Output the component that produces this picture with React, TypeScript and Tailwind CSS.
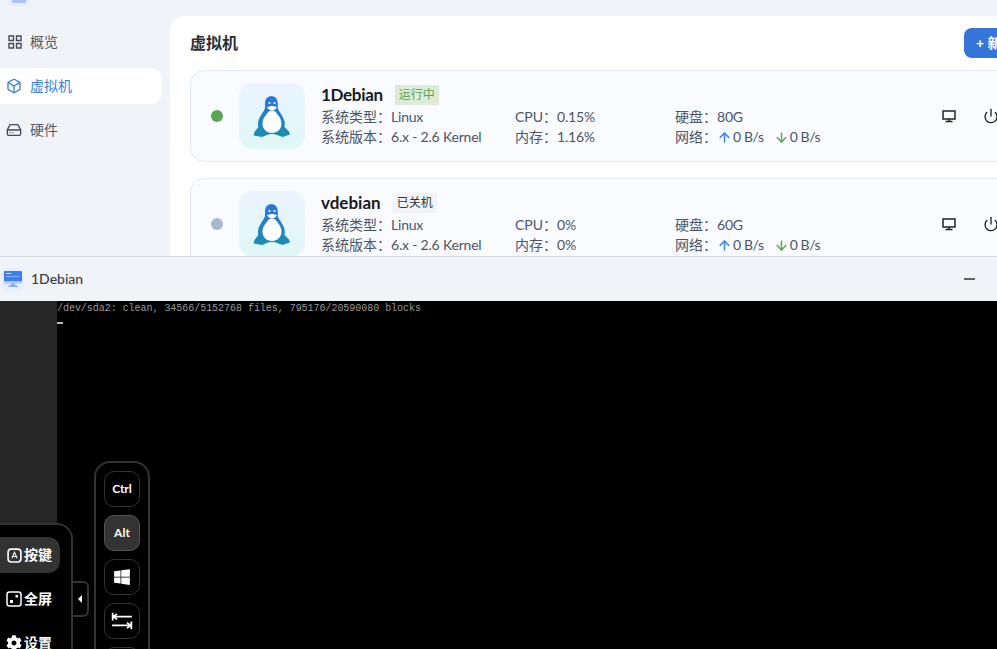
import React from 'react';
import { HardDrive, Box, Power, ArrowUp, ArrowDown } from 'lucide-react';
import { FaWindows, FaCog } from 'react-icons/fa';

const FONT = "font-['Lato','Noto_Sans_CJK_SC',sans-serif]";

function Tux({ id }: { id: string }) {
  return (
    <svg viewBox="0 0 66 66" className="w-[66px] h-[66px]">
      <defs>
        <linearGradient id={id} x1="0" y1="0" x2="0" y2="1">
          <stop offset="0" stopColor="#2a74df" />
          <stop offset="1" stopColor="#1a8fb0" />
        </linearGradient>
      </defs>
      <path
        fill={`url(#${id})`}
        d="M33 13c-4.500 0-7 3-7 7.500 0 3 .3 4.500-1 7-2.500 4-6 8.500-6 13.500 0 1 .1 2 .3 3L15.500 49l-1 3.500 8.500 1.500 5-2c1.500-.7 3-1 5-1s3.500.3 5 1l5.500 2 7.500-2.500-1-3-4.500-4.500c.2-1 .3-2 .3-3 0-5-3.500-9.500-6-13.500-1.300-2.500-1-4-1-7 0-4.500-2.500-7.500-7-7.500z"
      />
      <path
        fill="#fff"
        d="M33 27.500c-1.500 0-3 .7-4 1.900-2.700 3.100-5.500 6.600-5.500 11.100 0 5.500 4 9.500 9.500 9.500s9.500-4 9.500-9.500c0-4.500-2.800-8-5.500-11.100-1-1.200-2.500-1.900-4-1.900z"
      />
      <path fill="#fff" d="M28 24.500c1.500 2 3.300 3 5 3s3.500-1 5-3c-1.500-1-3.300-1.500-5-1.500s-3.500.5-5 1.500z" />
      <circle cx="30.500" cy="20" r="1.100" fill="#fff" />
      <circle cx="35.500" cy="20" r="1.100" fill="#fff" />
    </svg>
  );
}

function MonitorIcon() {
  return (
    <svg viewBox="0 0 14 14" className="w-[14px] h-[14px] ml-[7px] shrink-0 text-[#222]">
      <path d="M1 2h12v8H1z" fill="none" stroke="currentColor" strokeWidth="1.500" />
      <path d="M3.500 12.500h7M7 10v2.500" fill="none" stroke="currentColor" strokeWidth="1.500" />
    </svg>
  );
}

function GridIcon() {
  return (
    <svg viewBox="0 0 14 14" className="w-[14px] h-[14px] ml-px shrink-0 text-[#444a55]">
      <path d="M1 1h4.500v4.500H1zM8.500 1H13v4.500H8.500zM1 8.500h4.500V13H1zM8.500 8.500H13V13H8.500z" fill="none" stroke="currentColor" strokeWidth="1.400" />
    </svg>
  );
}

interface VmRow {
  name: string;
  on: boolean;
  cpu: string;
  mem: string;
  disk: string;
}

function VmCard({ vm }: { vm: VmRow }) {
  return (
    <div className="h-[92px] shrink-0 rounded-[14px] border border-[#e2e8f0] bg-[#fafbfe] flex items-center pl-[20px]">
      <div className={`w-3 h-3 rounded-full ${vm.on ? 'bg-[#5ba653]' : 'bg-[#a9b8cc]'}`} />
      <div className="ml-[16px] w-[66px] h-[66px] rounded-[14px] bg-gradient-to-b from-[#ebf4ff] to-[#dff7f6]">
        <Tux id={`tux-${vm.name}`} />
      </div>
      <div className="ml-[16px] w-[194px] text-sm leading-5 text-[#4a5568]">
        <div className="flex items-center h-5 mb-[2px]">
          <span className={`text-[17px] font-bold text-[#17191d] ${vm.on ? 'tracking-[-0.3px]' : ''}`}>{vm.name}</span>
          {vm.on ? (
            <span className="ml-[12px] px-[4px] h-5 text-[12px] leading-5 bg-[#dcecd9] text-[#5ba653]">运行中</span>
          ) : (
            <span className="ml-[12px] px-[4px] h-5 text-[12px] leading-5 bg-[#f1f3f7] text-[#333]">已关机</span>
          )}
        </div>
        <div>系统类型：<span className="tracking-[-0.2px]">Linux</span></div>
        <div>系统版本：<span className="tracking-[-0.2px]">6.x - 2.6 Kernel</span></div>
      </div>
      <div className="w-[160px] pt-[22px] text-sm leading-5 text-[#4a5568]">
        <div>CPU：<span className="tracking-[-0.2px]">{vm.cpu}</span></div>
        <div>内存：<span className="tracking-[-0.2px]">{vm.mem}</span></div>
      </div>
      <div className="w-[260px] pt-[22px] text-sm leading-5 text-[#4a5568]">
        <div>硬盘：<span className="tracking-[-0.2px]">{vm.disk}</span></div>
        <div className="flex items-center">
          <span>网络：</span>
          <ArrowUp className="w-[15px] h-[15px] text-[#3b82f6] shrink-0" strokeWidth={2.4} />
          <span className="ml-px mr-[10px] tracking-[-0.4px]">0 B/s</span>
          <ArrowDown className="w-[15px] h-[15px] text-[#5ba653] shrink-0" strokeWidth={2.4} />
          <span className="ml-px tracking-[-0.4px]">0 B/s</span>
        </div>
      </div>
      <MonitorIcon />
      <Power className="w-4 h-4 text-[#222] ml-[27px] shrink-0" strokeWidth={2} />
    </div>
  );
}

function NavItem({ icon, label, active }: { icon: React.ReactNode; label: string; active?: boolean }) {
  return (
    <div
      className={`h-9 flex items-center gap-[8px] pl-[6px] rounded-r-xl text-sm ${
        active ? 'bg-white text-[#3b7de0]' : 'text-[#555b66]'
      }`}
    >
      <span className="w-4 flex justify-center">{icon}</span>
      {label}
    </div>
  );
}

function KeyBtn({ children, active }: { children: React.ReactNode; active?: boolean }) {
  return (
    <div
      className={`w-9 h-9 shrink-0 rounded-[10px] border flex items-center justify-center text-white text-[12px] font-bold ${
        active ? 'bg-[#333] border-[#555]' : 'bg-black border-[#333]'
      }`}
    >
      {children}
    </div>
  );
}

export default function App() {
  return (
    <div className={`w-[997px] h-[649px] overflow-hidden flex flex-col ${FONT}`}>
      {/* manager page behind the console window */}
      <div className="h-[256px] shrink-0 flex w-[1180px] bg-[#f0f3f8] overflow-hidden">
        <aside className="w-[170px] shrink-0">
          <div className="ml-[7px] w-[23px] h-[6px] rounded-b-md bg-[#e6edfb] flex justify-center">
            <div className="w-[14px] h-[3px] bg-[#a9c4f5]" />
          </div>
          <div className="mt-[18px] w-[162px] flex flex-col gap-2">
            <NavItem icon={<GridIcon />} label="概览" />
            <NavItem active icon={<Box className="w-4 h-4" />} label="虚拟机" />
            <NavItem icon={<HardDrive className="w-4 h-4 text-[#444a55]" />} label="硬件" />
          </div>
        </aside>
        <main className="mt-4 flex-1 bg-white rounded-tl-2xl pl-[20px] pr-[20px] flex flex-col">
          <div className="h-[54px] shrink-0 flex items-start pt-[12px] w-[870px] justify-between">
            <h1 className="text-base font-bold text-[#2b2f36] leading-[30px]">虚拟机</h1>
            <button className="h-[30px] w-[96px] rounded-lg bg-[#3574d9] text-white text-sm font-bold text-left pl-[12px] shrink-0">
              + 新建
            </button>
          </div>
          <div className="flex flex-col gap-4">
            <VmCard vm={{ name: '1Debian', on: true, cpu: '0.15%', mem: '1.16%', disk: '80G' }} />
            <VmCard vm={{ name: 'vdebian', on: false, cpu: '0%', mem: '0%', disk: '60G' }} />
          </div>
        </main>
      </div>

      {/* console window */}
      <div className="flex-1 flex flex-col min-h-0 relative border-t border-[#d9dde3]">
        <header className="h-[44px] shrink-0 bg-[#f0f4f9] flex items-center pl-px">
          <div className="w-[23px] h-[23px] rounded-md bg-[#e6edfb] flex items-center justify-center">
            <svg viewBox="0 0 20 20" className="w-[20px] h-[20px]">
              <rect x="1" y="2" width="18" height="12" rx="1" fill="#3d7ef0" />
              <rect x="1" y="12" width="18" height="2.500" fill="#a9c6fa" />
              <rect x="8" y="14.500" width="4" height="2" fill="#7fa9f7" />
              <rect x="5.500" y="16.500" width="9" height="1.200" fill="#5b8ff5" />
              <rect x="3" y="4" width="5" height="1" fill="#dbe7ff" />
              <rect x="3" y="7" width="13" height="1" fill="#8db4fa" />
            </svg>
          </div>
          <span className="ml-[7px] text-sm font-medium text-[#3a3f47]">1Debian</span>
          <svg viewBox="0 0 12 2" className="w-[11px] h-[2px] ml-[881px] shrink-0">
            <rect width="12" height="2" fill="#555" />
          </svg>
        </header>
        <div className="flex-1 flex min-h-0 bg-black">
          <div className="w-[57px] shrink-0 bg-[#262626]" />
          <div className="flex-1 pt-px font-['Liberation_Mono',monospace] text-[10px] leading-[14px] tracking-[-0.035px] text-[#9a9a9a]">
            <div>/dev/sda2: clean, 34566/5152768 files, 795176/20590080 blocks</div>
            <div className="mt-[6px] w-[6px] h-[2px] bg-[#bbb]" />
          </div>
        </div>

        {/* floating toolbar */}
        <div className="absolute left-0 top-[266px] w-[73px] h-[140px] bg-black border-2 border-l-0 border-[#333] rounded-tr-2xl text-white text-sm font-bold">
          <div className="mt-3 w-[60px] h-9 bg-[#333] rounded-r-xl flex items-center pl-[7px] gap-[2px]">
            <svg viewBox="0 0 14 14" className="w-[15px] h-[15px] shrink-0">
              <rect x="1" y="1" width="12" height="12" rx="3" fill="none" stroke="#fff" strokeWidth="1.500" />
              <path d="M4.500 9.500 7 4l2.500 5.500M5.400 8h3.200" fill="none" stroke="#fff" strokeWidth="1" />
            </svg>
            按键
          </div>
          <div className="mt-2 h-9 flex items-center pl-[6px] gap-[2px]">
            <svg viewBox="0 0 16 16" className="w-[16px] h-[16px] shrink-0">
              <rect x="1" y="1" width="14" height="14" rx="2.500" fill="none" stroke="#fff" strokeWidth="1.500" />
              <rect x="4" y="9" width="3" height="3" fill="#fff" />
              <rect x="9.500" y="4" width="2.500" height="2.500" fill="#fff" />
            </svg>
            全屏
          </div>
          <div className="mt-2 h-9 flex items-center pl-[6px] gap-[2px]">
            <FaCog className="w-4 h-4 shrink-0" />
            设置
          </div>
        </div>
        <div className="absolute left-[73px] top-[324px] w-4 h-9 bg-black border-2 border-l-0 border-[#333] rounded-r-md flex items-center justify-center">
          <div className="w-0 h-0 border-y-[4px] border-y-transparent border-r-[4px] border-r-white" />
        </div>

        {/* key panel */}
        <div className="absolute left-[94px] top-[204px] w-[56px] h-[240px] bg-black border-2 border-[#333] rounded-2xl flex flex-col items-center gap-2 pt-2">
          <KeyBtn>Ctrl</KeyBtn>
          <KeyBtn active>Alt</KeyBtn>
          <KeyBtn>
            <FaWindows className="w-[18px] h-[18px]" />
          </KeyBtn>
          <KeyBtn>
            <svg viewBox="0 0 20 20" className="w-[22px] h-[22px]">
              <path d="M1.500 2.500v7M2 6h17M2 6l3.500-2.500M2 6l3.500 2.500M18.500 10.500v7M1 14h17M18 14l-3.500-2.500M18 14l-3.500 2.500" fill="none" stroke="#fff" strokeWidth="1.600" />
            </svg>
          </KeyBtn>
          <KeyBtn>{''}</KeyBtn>
        </div>
      </div>
    </div>
  );
}
